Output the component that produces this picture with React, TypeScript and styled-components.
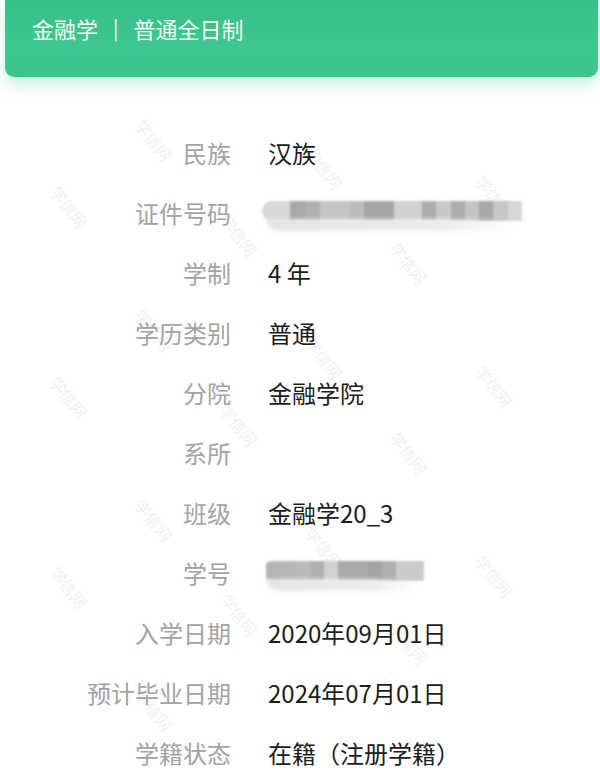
import React from 'react';
import styled, { createGlobalStyle } from 'styled-components';

const GlobalStyle = createGlobalStyle`
  html, body {
    margin: 0;
    padding: 0;
    background: #ffffff;
  }
  body {
    font-family: "Noto Sans CJK SC", "Noto Sans", sans-serif;
  }
`;

const Page = styled.div`
  position: relative;
  width: 600px;
  height: 779px;
  overflow: hidden;
  background: #fff;
`;

const HeaderWrap = styled.div`
  position: relative;
  z-index: 2;
  padding: 0 2px 0 5px;
`;

const Header = styled.div`
  height: 77px;
  background: linear-gradient(180deg, #37bf88 0%, #3fc78f 60%, #3bc38b 100%);
  border-radius: 0 0 9px 9px;
  box-shadow: 0 8px 14px rgba(70, 205, 140, 0.28);
  display: flex;
  align-items: flex-start;
  padding: 12px 0 0 27px;
  box-sizing: border-box;
  color: #f2fbf6;
  font-size: 22px;
  line-height: 32px;
`;

const Divider = styled.span`
  margin: 0 15px 0 15px;
  font-size: 20px;
`;

const List = styled.div`
  position: relative;
  z-index: 1;
  padding-top: 45px;
`;

const Row = styled.div`
  display: grid;
  grid-template-columns: 231px 1fr;
  column-gap: 37px;
  height: 60px;
  align-items: center;
  font-size: 24px;
`;

const Label = styled.div`
  text-align: right;
  color: #a3a3a3;
  white-space: nowrap;
`;

const Value = styled.div`
  color: #1c1c1c;
  white-space: nowrap;
`;

const Mask = styled.div<{ $w: number }>`
  position: relative;
  width: ${(p) => p.$w}px;
  height: 22px;
  margin-left: -6px;
`;

const MaskBlocks = styled.div`
  display: flex;
  height: 20px;
  border-radius: 10px 0 0 10px;
  overflow: hidden;
  filter: blur(1px);
`;

const Block = styled.div<{ $c: string; $w: number }>`
  width: ${(p) => p.$w}px;
  background: ${(p) => p.$c};
`;

const Smear = styled.div<{ $w: number }>`
  position: absolute;
  left: 4px;
  top: 18px;
  width: ${(p) => p.$w}px;
  height: 12px;
  background: linear-gradient(90deg, #e4e4e4, #ececec 70%, rgba(240, 240, 240, 0));
  border-radius: 0 0 40px 60px;
  filter: blur(2px);
`;

const Watermarks = styled.div`
  position: absolute;
  inset: 0;
  pointer-events: none;
  z-index: 0;
`;

const Mark = styled.span`
  position: absolute;
  font-size: 16px;
  color: #f1f1f1;
  transform: rotate(52deg);
  white-space: nowrap;
`;

const idBlocks: [string, number][] = [
  ['#d8d8d8', 28],
  ['#a9a9a9', 15],
  ['#b1b1b1', 15],
  ['#c4c4c4', 30],
  ['#bcbcbc', 14],
  ['#a6a6a6', 30],
  ['#d0d0d0', 28],
  ['#acacac', 14],
  ['#c8c8c8', 15],
  ['#adadad', 14],
  ['#c4c4c4', 14],
  ['#a8a8a8', 14],
  ['#c6c6c6', 15],
  ['#d7d7d7', 14],
];

const stuBlocks: [string, number][] = [
  ['#ffffff', 4],
  ['#b5b5b5', 30],
  ['#bbbbbb', 14],
  ['#b0b0b0', 14],
  ['#d1d1d1', 14],
  ['#a9a9a9', 30],
  ['#a4a4a4', 14],
  ['#afafaf', 14],
  ['#cbcbcb', 28],
];

const rows: { label: string; value?: string; mask?: 'id' | 'stu' }[] = [
  { label: '民族', value: '汉族' },
  { label: '证件号码', mask: 'id' },
  { label: '学制', value: '4 年' },
  { label: '学历类别', value: '普通' },
  { label: '分院', value: '金融学院' },
  { label: '系所', value: '' },
  { label: '班级', value: '金融学20_3' },
  { label: '学号', mask: 'stu' },
  { label: '入学日期', value: '2020年09月01日' },
  { label: '预计毕业日期', value: '2024年07月01日' },
  { label: '学籍状态', value: '在籍（注册学籍）' },
];

const marks: { x: number; y: number }[] = [];
for (let r = -1; r < 9; r++) {
  for (let c = 0; c < 5; c++) {
    const x = 20 + c * 170 + (r % 2 === 0 ? 0 : 85) - 60;
    const y = 100 + r * 95 + c * 28;
    if (x >= 20 && x <= 540 && y >= 95 && y <= 720) marks.push({ x, y });
  }
}

const App: React.FC = () => {
  return (
    <Page>
      <GlobalStyle />
      <Watermarks>
        {marks.map((m, i) => (
          <Mark key={i} style={{ left: m.x, top: m.y }}>
            学信网
          </Mark>
        ))}
      </Watermarks>
      <HeaderWrap>
        <Header>
          <span>金融学</span>
          <Divider>|</Divider>
          <span>普通全日制</span>
        </Header>
      </HeaderWrap>
      <List>
        {rows.map((row) => (
          <Row key={row.label}>
            <Label>{row.label}</Label>
            {row.mask === 'id' ? (
              <Mask $w={262}>
                <MaskBlocks>
                  {idBlocks.map(([c, w], i) => (
                    <Block key={i} $c={c} $w={w} />
                  ))}
                </MaskBlocks>
                <Smear $w={250} />
              </Mask>
            ) : row.mask === 'stu' ? (
              <Mask $w={175}>
                <MaskBlocks>
                  {stuBlocks.map(([c, w], i) => (
                    <Block key={i} $c={c} $w={w} />
                  ))}
                </MaskBlocks>
                <Smear $w={150} />
              </Mask>
            ) : (
              <Value>{row.value}</Value>
            )}
          </Row>
        ))}
      </List>
    </Page>
  );
};

export default App;
